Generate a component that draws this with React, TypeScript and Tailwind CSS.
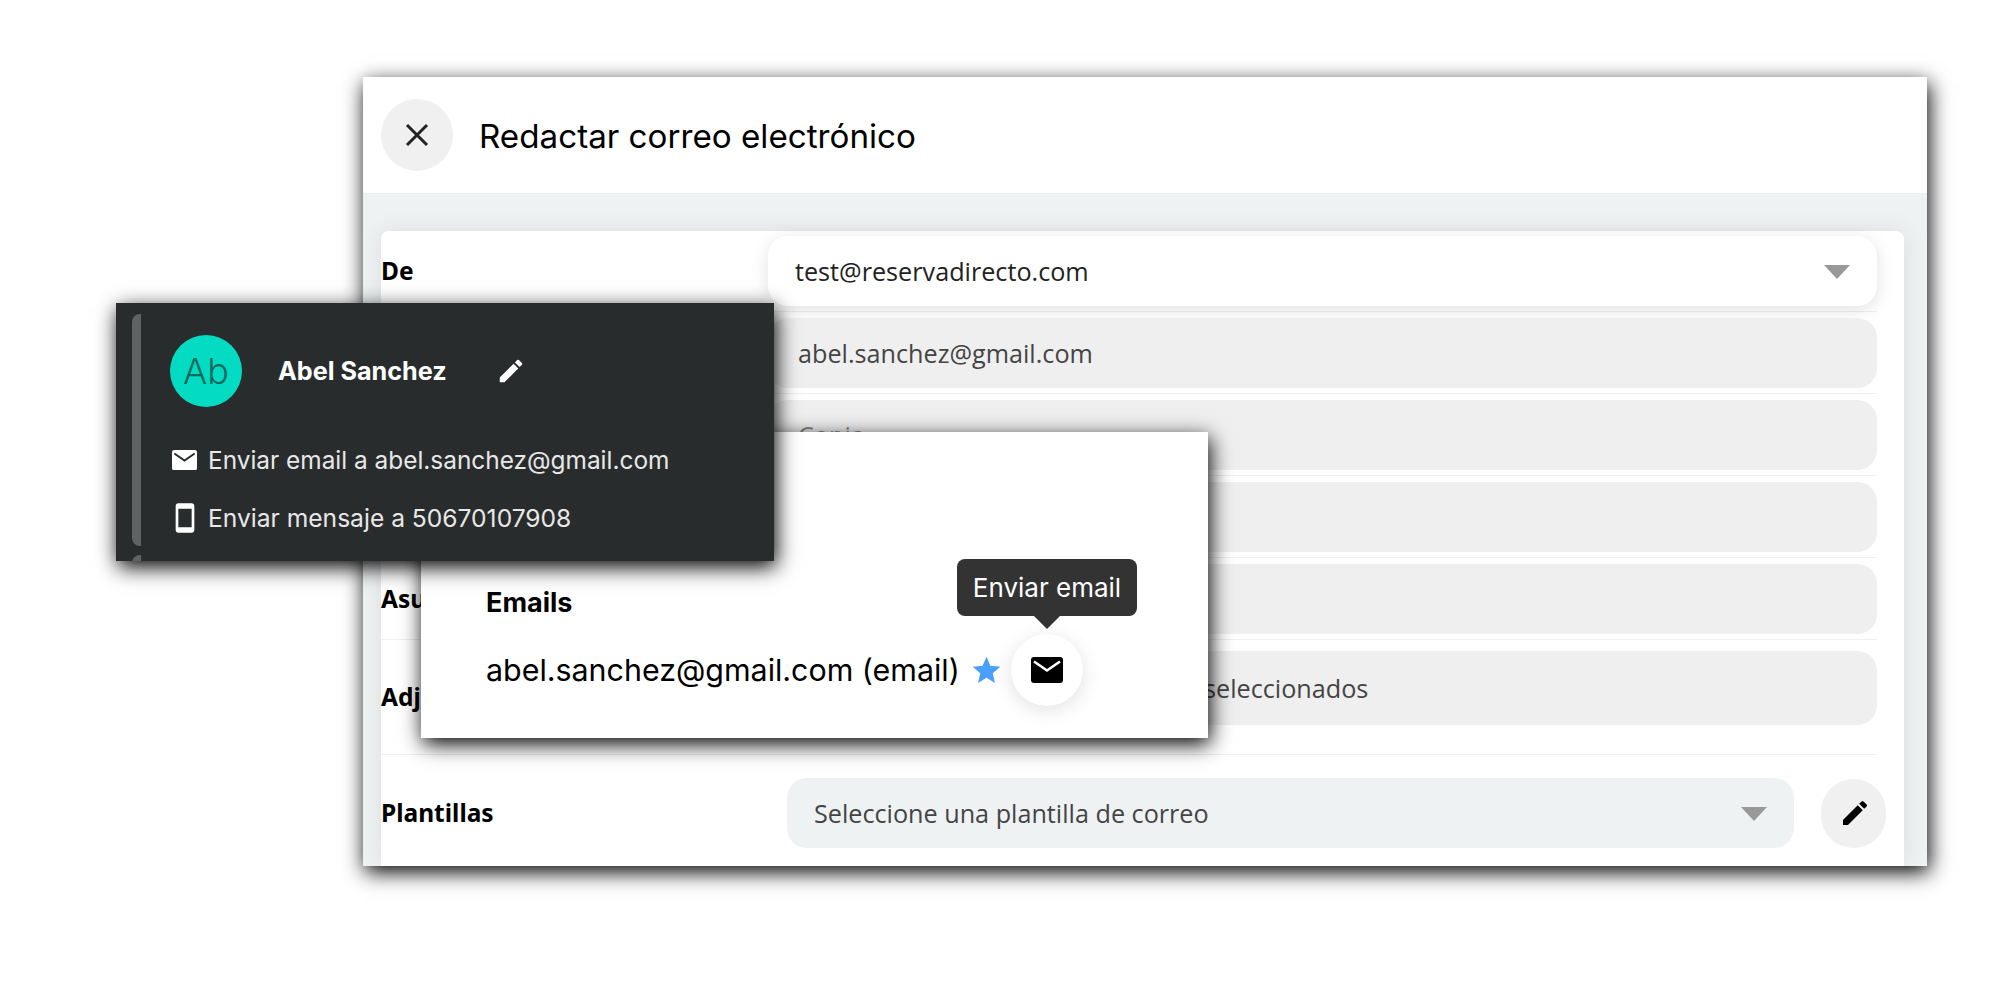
import React from "react";
import { MdEdit, MdSmartphone, MdStar } from "react-icons/md";

const Caret = () => (
  <svg width="26" height="14" viewBox="0 0 26 14" className="shrink-0">
    <path d="M0 0H26L13 14Z" fill="#999999" />
  </svg>
);

const Envelope = ({ w, fill, line }: { w: number; fill: string; line: string }) => (
  <svg width={w} height={(w * 26) / 32} viewBox="0 0 32 26" className="shrink-0">
    <rect x="0" y="0" width="32" height="26" rx="3" fill={fill} />
    <path d="M3 4.5L16 13.5L29 4.5" fill="none" stroke={line} strokeWidth="2.6" />
  </svg>
);

function Row({ label, children, className = "", labelClass = "" }: { label?: string; children: React.ReactNode; className?: string; labelClass?: string }) {
  return (
    <div className={`flex border-b border-[#f0f0f0] ${className}`}>
      <div className={`w-[387px] shrink-0 self-center font-['Noto_Sans'] text-[24.5px] font-bold text-black ${labelClass}`}>{label}</div>
      <div className="flex-1 min-w-0">{children}</div>
    </div>
  );
}

function Field({ text, tall, className = "" }: { text?: string; tall?: boolean; className?: string }) {
  return (
    <div className={`flex items-center rounded-[20px] bg-[#efefef] pl-[30px] pt-[2px] font-['Open_Sans'] text-[25.2px] text-[#444444] ${tall ? "h-[74px]" : "h-[70px]"} ${className}`}>
      {text}
    </div>
  );
}

export default function App() {
  return (
    <div className="relative h-[1000px] w-[2000px] overflow-hidden bg-white font-['Inter']">
      {/* Ventana principal */}
      <div className="absolute left-[363px] top-[77px] flex h-[789px] w-[1564px] flex-col overflow-hidden bg-white shadow-[2px_6px_20px_rgba(0,0,0,1)]">
        <div className="flex h-[117px] shrink-0 items-center border-b border-[#eceff0] bg-white pl-[18px]">
          <div className="flex h-[72px] w-[72px] items-center justify-center rounded-full bg-[#f0f0f0]">
            <svg width="24" height="24" viewBox="0 0 24 24" className="-mt-[1px]">
              <path d="M2 2L22 22M22 2L2 22" stroke="#222222" strokeWidth="3" fill="none" />
            </svg>
          </div>
          <div className="ml-[26px] pt-[3px] text-[33.2px] text-black">Redactar correo electrónico</div>
        </div>
        <div className="flex min-h-0 flex-1 flex-col bg-[#eff2f3] pl-[18px] pr-[23px] pt-[37px]">
          <div className="flex flex-1 flex-col rounded-t-[8px] bg-white pr-[27px] shadow-[0_0_24px_rgba(0,0,0,0.09)]">
            <Row label="De" className="pb-[5px] pt-[5px]">
              <div className="flex h-[70px] items-center justify-between rounded-[20px] bg-white pl-[27px] pr-[27px] pt-[2px] font-['Open_Sans'] text-[25.2px] text-[#222222] shadow-[0_4px_18px_rgba(0,0,0,0.12)]">
                <span>test@reservadirecto.com</span>
                <Caret />
              </div>
            </Row>
            <Row className="pb-[5px] pt-[6px]">
              <Field text="abel.sanchez@gmail.com" />
            </Row>
            <Row className="pb-[5px] pt-[6px]">
              <Field text="Copia" className="text-[#888888]" />
            </Row>
            <Row className="pb-[5px] pt-[6px]">
              <Field />
            </Row>
            <Row label="Asunto" className="pb-[5px] pt-[6px]">
              <Field />
            </Row>
            <Row label="Adjuntos" labelClass="mt-[18px]" className="pb-[29px] pt-[11px]">
              <Field text="seleccionados" tall className="pl-[436px]" />
            </Row>
            <div className="flex items-center pt-[23px]">
              <div className="w-[406px] shrink-0 font-['Noto_Sans'] text-[24.5px] font-bold text-black">Plantillas</div>
              <div className="flex h-[70px] w-[1007px] shrink-0 items-center justify-between rounded-[20px] bg-[#eff2f3] pl-[27px] pr-[27px] pt-[2px] font-['Open_Sans'] text-[25.2px] text-[#444444]">
                <span>Seleccione una plantilla de correo</span>
                <Caret />
              </div>
              <div className="ml-[27px] flex h-[69px] w-[65px] shrink-0 items-center justify-center rounded-full bg-[#f0f0f0]">
                <MdEdit size={32} color="#000000" className="ml-[2px]" />
              </div>
            </div>
          </div>
        </div>
      </div>

      {/* Panel de correos */}
      <div className="absolute left-[421px] top-[432px] h-[306px] w-[787px] bg-white shadow-[2px_6px_20px_rgba(0,0,0,1)]">
        <div className="ml-[65px] mt-[156px] text-[27px] font-bold leading-[30px] text-black">Emails</div>
        <div className="ml-[65px] mt-[16px] flex items-center">
          <span className="text-[30.4px] leading-[72px] text-black">abel.sanchez@gmail.com (email)</span>
          <MdStar size={33} color="#4a9efc" className="ml-[10px]" />
          <div className="ml-[8px] flex h-[72px] w-[72px] items-center justify-center rounded-full bg-white shadow-[0_4px_20px_rgba(0,0,0,0.12)]">
            <Envelope w={32} fill="#000000" line="#ffffff" />
          </div>
        </div>
        <div className="absolute left-[536px] top-[127px] flex h-[57px] w-[180px] items-center justify-center rounded-[8px] bg-[#333333] text-[26px] text-white">
          Enviar email
          <svg width="26" height="13" viewBox="0 0 26 13" className="absolute left-[77px] top-[57px]">
            <path d="M0 0H26L13 13Z" fill="#333333" />
          </svg>
        </div>
      </div>

      {/* Tarjeta de contacto */}
      <div className="absolute left-[116px] top-[303px] h-[258px] w-[658px] overflow-hidden bg-[#292c2d] shadow-[2px_6px_20px_rgba(0,0,0,1)]">
        <div className="absolute left-[16px] top-[11px] h-[232px] w-[9px] rounded-l-[8px] bg-[#5f6364]" />
        <div className="absolute left-[16px] top-[252px] h-[20px] w-[9px] rounded-l-[8px] bg-[#5f6364]" />
        <div className="ml-[54px] mt-[32px] flex items-center">
          <div className="flex h-[72px] w-[72px] items-center justify-center rounded-full bg-[#03dcc3] text-[36px] font-light text-[#086a5e]">Ab</div>
          <div className="ml-[36px] pt-[1px] text-[25.2px] font-bold text-white">Abel Sanchez</div>
          <MdEdit size={30} color="#ffffff" className="ml-[49px]" />
        </div>
        <div className="ml-[56px] mt-[35px] flex h-[36px] items-center text-[24.4px] text-[#e8e8e8]">
          <Envelope w={25} fill="#ffffff" line="#292c2d" />
          <span className="ml-[11px]">Enviar email a abel.sanchez@gmail.com</span>
        </div>
        <div className="ml-[54px] mt-[22px] flex h-[36px] items-center text-[24.6px] text-[#e8e8e8]">
          <MdSmartphone size={32} color="#ffffff" className="-ml-[1px]" />
          <span className="ml-[7px]">Enviar mensaje a 50670107908</span>
        </div>
      </div>
    </div>
  );
}
